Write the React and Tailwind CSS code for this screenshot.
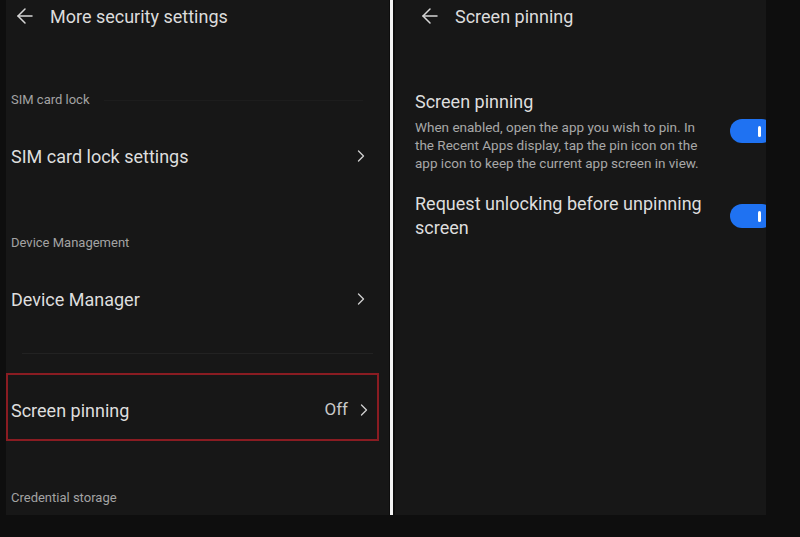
import React from "react";
import { ArrowLeft, ChevronRight } from "lucide-react";

const font = { fontFamily: "Roboto, 'Noto Sans', sans-serif" };

function SectionLabel({ children, className = "" }) {
  return (
    <div className={`h-[24px] flex items-center pl-[5px] text-[13px] text-[#a3a3a3] ${className}`}>
      {children}
    </div>
  );
}

function NavRow({ label, value, pad = "pl-[5px] pr-[18px]", className = "" }) {
  return (
    <div className={`h-[56px] flex items-center text-[18px] text-[#dedede] ${pad} ${className}`}>
      <span className="flex-1">{label}</span>
      {value && <span className="text-[17px] text-[#c8c8c8] mr-[6px]">{value}</span>}
      <ChevronRight size={20} strokeWidth={1.6} className="text-[#cfcfcf]" />
    </div>
  );
}

function Toggle() {
  return (
    <div className="w-[44px] h-[24px] rounded-full bg-[#1f72f2] flex items-center justify-end pr-[13px] shrink-0 mr-[-8px]">
      <div className="w-[3px] h-[11px] rounded-full bg-white" />
    </div>
  );
}

export default function App() {
  return (
    <div className="w-[800px] h-[537px] bg-[#0e0e0e] overflow-hidden" style={font}>
      <div className="h-[515px] flex pl-[6px]">
        {/* left panel */}
        <div className="w-[383px] h-full bg-[#171717] flex flex-col">
          <div className="h-[32px] flex items-center pl-[7px] gap-[13px]">
            <ArrowLeft size={24} strokeWidth={1.5} className="text-[#d6d6d6]" />
            <span className="text-[18px] text-[#dcdcdc]">More security settings</span>
          </div>
          <div className="mt-[56px] flex items-center">
            <SectionLabel>SIM card lock</SectionLabel>
            <div className="flex-1 h-px bg-[#1d1d1d] ml-[14px] mr-[26px]" />
          </div>
          <NavRow label="SIM card lock settings" className="mt-[16px]" />
          <SectionLabel className="mt-[47px]">Device Management</SectionLabel>
          <NavRow label="Device Manager" className="mt-[16px]" />
          <div className="h-px bg-[#222222] mx-[16px] mt-[26px]" />
          <div className="mt-[19px] mr-[10px] h-[68px] border-2 border-[#8a1c22] flex items-center">
            <NavRow label="Screen pinning" value="Off" pad="pl-[3px] pr-[3px]" className="w-full mt-[6px]" />
          </div>
          <SectionLabel className="mt-[45px]">Credential storage</SectionLabel>
        </div>
        {/* divider */}
        <div className="w-px h-full bg-[#0d0d0d]" />
        <div className="w-[3px] h-full bg-[#f2f2f2]" />
        <div className="w-[2px] h-full bg-[#0d0d0d]" />
        {/* right panel */}
        <div className="w-[371px] h-full bg-[#171717] overflow-hidden flex flex-col">
          <div className="h-[32px] flex items-center pl-[23px] gap-[13px]">
            <ArrowLeft size={24} strokeWidth={1.5} className="text-[#d6d6d6]" />
            <span className="text-[18px] text-[#dcdcdc]">Screen pinning</span>
          </div>
          <div className="mt-[58px] flex items-center pl-[20px]">
            <div className="flex-1">
              <div className="text-[18px] leading-[24px] text-[#dedede]">Screen pinning</div>
              <div className="mt-[4px] text-[13.5px] leading-[18px] text-[#a8a8a8] whitespace-nowrap">
                When enabled, open the app you wish to pin. In
                <br />
                the Recent Apps display, tap the pin icon on the
                <br />
                app icon to keep the current app screen in view.
              </div>
            </div>
            <Toggle />
          </div>
          <div className="mt-[20px] flex items-center pl-[20px]">
            <div className="flex-1 text-[18px] leading-[24px] text-[#dedede] pr-[20px]">
              Request unlocking before unpinning screen
            </div>
            <Toggle />
          </div>
        </div>
      </div>
    </div>
  );
}
